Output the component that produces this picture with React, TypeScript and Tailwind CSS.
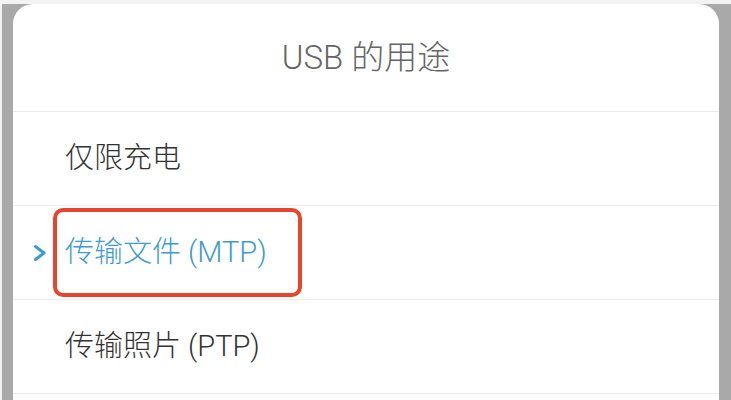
const font = {
  fontFamily: 'Roboto, "Noto Sans CJK SC", sans-serif',
};

function Row({ label }: { label: string }) {
  return (
    <div className="flex h-[94px] items-center border-b border-[#ececec] pl-[52px] text-[29px] font-light text-[#333333]">
      {label}
    </div>
  );
}

function Chevron() {
  return (
    <svg width="14" height="18" viewBox="0 0 14 18" fill="none">
      <path
        d="M2.5 2.5 L11 9 L2.5 15.5"
        stroke="#3c9bd2"
        strokeWidth="3"
        strokeLinecap="round"
        strokeLinejoin="round"
      />
    </svg>
  );
}

export default function App() {
  return (
    <div
      className="flex h-[400px] w-[731px] flex-col overflow-hidden border-t-4 border-l-2 border-[#f3f3f3] bg-[#a9a9a9] pr-[12px] pl-[11px]"
      style={font}
    >
      <div className="flex-1 rounded-t-[20px] bg-white">
        <div className="flex h-[108px] items-center justify-center border-b border-[#ececec] text-[33px] font-light text-[#666666]">
          USB 的用途
        </div>
        <Row label="仅限充电" />
        <div className="flex h-[94px] items-center border-b border-[#ececec] pl-[20px]">
          <Chevron />
          <div className="ml-[6px] flex h-[89px] w-[249px] items-center rounded-[10px] border-4 border-[#e8452c] pl-[8px] text-[29px] font-light whitespace-nowrap text-[#3c9bd2]">
            传输文件 (MTP)
          </div>
        </div>
        <Row label="传输照片 (PTP)" />
      </div>
    </div>
  );
}
